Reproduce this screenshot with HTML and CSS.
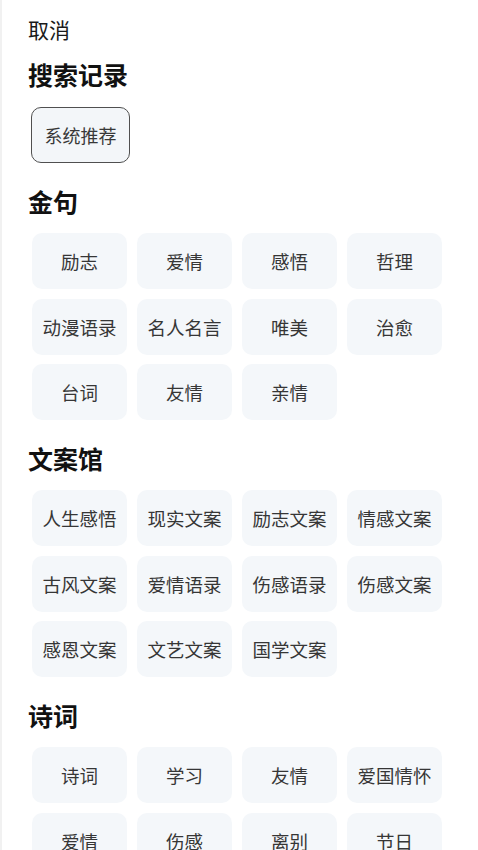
FILE: index.html
```html
<!DOCTYPE html>
<html lang="zh-CN">
<head>
<meta charset="utf-8">
<link rel="stylesheet" href="styles.css">
</head>
<body>
<div class="page">
  <div class="cancel">取消</div>

  <section class="section first">
    <h2 class="title">搜索记录</h2>
    <div class="history">
      <span class="chip">系统推荐</span>
    </div>
  </section>

  <section class="section">
    <h2 class="title">金句</h2>
    <div class="grid">
      <div class="tile">励志</div>
      <div class="tile">爱情</div>
      <div class="tile">感悟</div>
      <div class="tile">哲理</div>
      <div class="tile">动漫语录</div>
      <div class="tile">名人名言</div>
      <div class="tile">唯美</div>
      <div class="tile">治愈</div>
      <div class="tile">台词</div>
      <div class="tile">友情</div>
      <div class="tile">亲情</div>
    </div>
  </section>

  <section class="section">
    <h2 class="title">文案馆</h2>
    <div class="grid">
      <div class="tile">人生感悟</div>
      <div class="tile">现实文案</div>
      <div class="tile">励志文案</div>
      <div class="tile">情感文案</div>
      <div class="tile">古风文案</div>
      <div class="tile">爱情语录</div>
      <div class="tile">伤感语录</div>
      <div class="tile">伤感文案</div>
      <div class="tile">感恩文案</div>
      <div class="tile">文艺文案</div>
      <div class="tile">国学文案</div>
    </div>
  </section>

  <section class="section">
    <h2 class="title">诗词</h2>
    <div class="grid">
      <div class="tile">诗词</div>
      <div class="tile">学习</div>
      <div class="tile">友情</div>
      <div class="tile">爱国情怀</div>
      <div class="tile">爱情</div>
      <div class="tile">伤感</div>
      <div class="tile">离别</div>
      <div class="tile">节日</div>
    </div>
  </section>
</div>
</body>
</html>
```

FILE: styles.css
```css
html, body {
  margin: 0;
  padding: 0;
  background: #ffffff;
}

body {
  font-family: "Noto Sans CJK SC", "Noto Sans", sans-serif;
  color: #111111;
  overflow: hidden;
}

.page {
  min-height: 850px;
  box-sizing: border-box;
  border-left: 2px solid #f1f1f1;
  padding: 14.5px 0 0 26px;
}

.cancel {
  font-size: 21px;
  line-height: 28px;
  color: #1a1a1a;
}

.section {
  margin-top: 22.5px;
}

.section.first {
  margin-top: 16.5px;
}

.title {
  margin: 0;
  padding-bottom: 2px;
  font-size: 25px;
  line-height: 30px;
  font-weight: 700;
  color: #111111;
}

.history {
  margin-top: 16px;
  padding-left: 3px;
  display: flex;
}

.chip {
  box-sizing: border-box;
  width: 99px;
  height: 56px;
  display: flex;
  align-items: center;
  justify-content: center;
  border: 1.5px solid #505050;
  border-radius: 10px;
  background: #f3f6f9;
  font-size: 18px;
  color: #383838;
}

.grid {
  margin-top: 15.5px;
  padding-left: 4px;
  display: grid;
  grid-template-columns: repeat(4, 95px);
  column-gap: 10px;
  row-gap: 9.5px;
}

.tile {
  height: 56px;
  display: flex;
  align-items: center;
  justify-content: center;
  border-radius: 10px;
  background: #f4f7fa;
  font-size: 18.5px;
  color: #363636;
  white-space: nowrap;
}
```
